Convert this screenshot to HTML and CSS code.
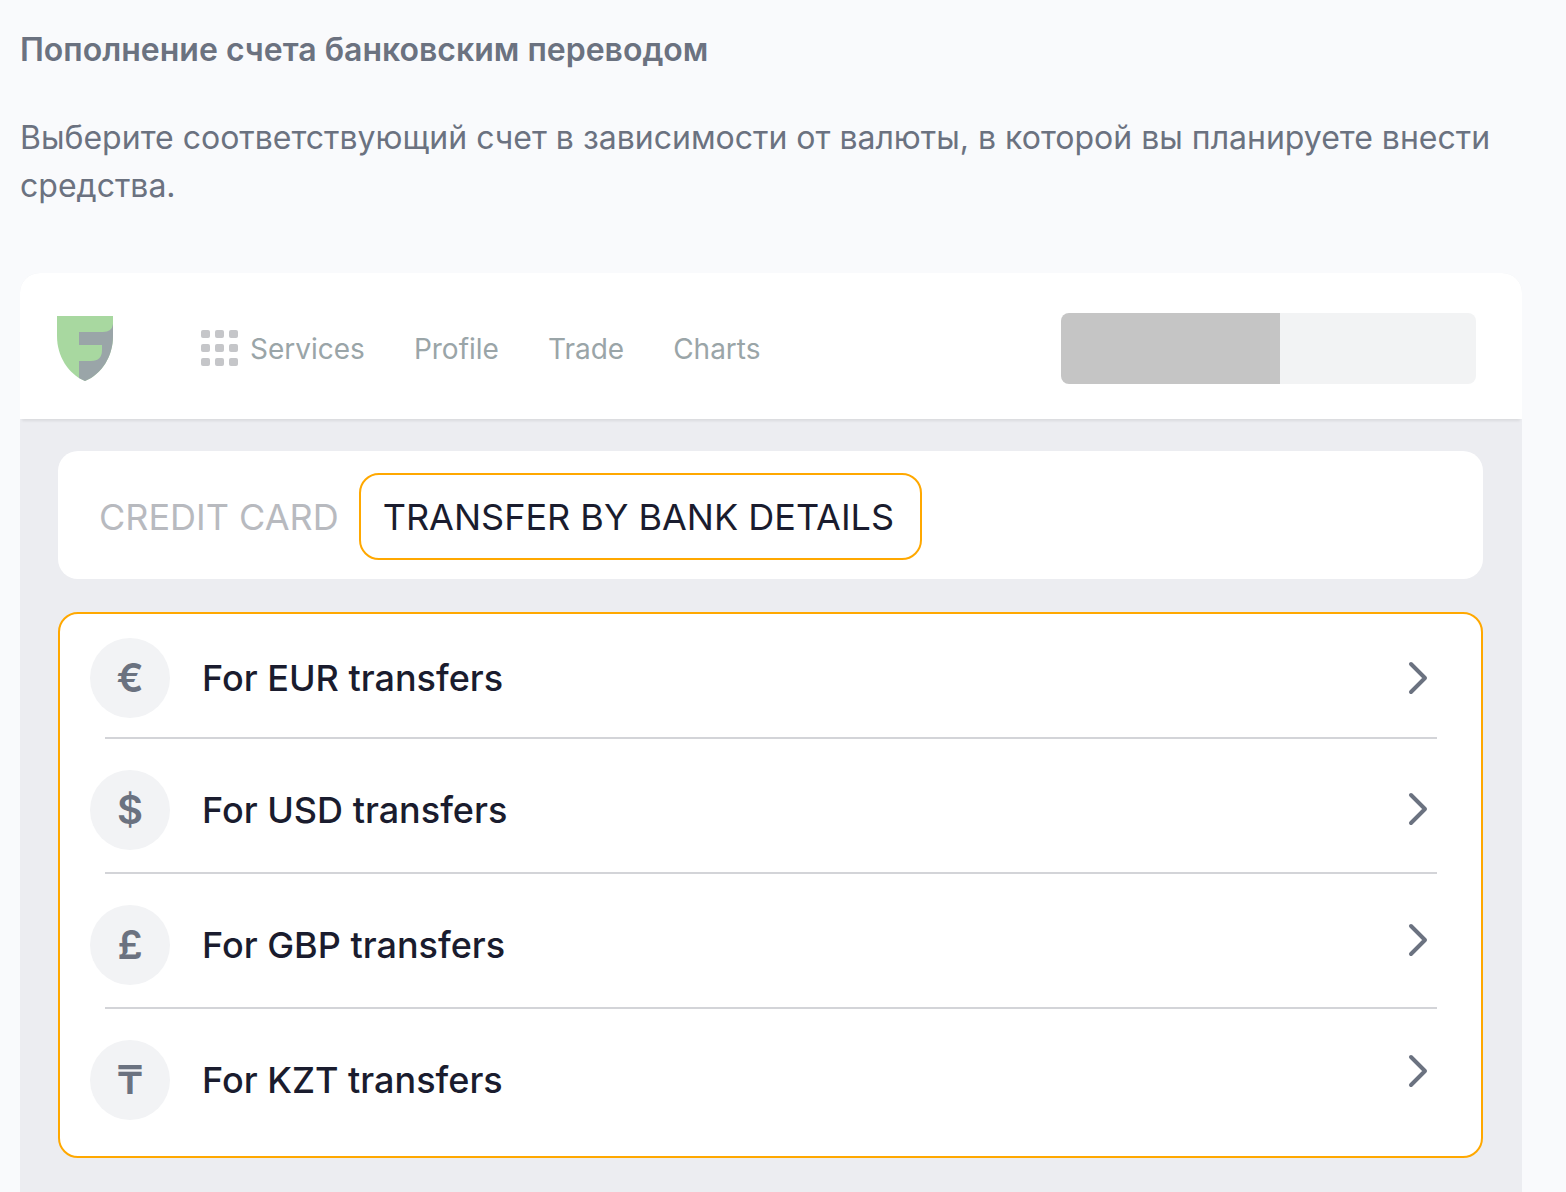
FILE: index.html
```html
<!DOCTYPE html>
<html lang="ru">
  <head>
    <meta charset="UTF-8" />
    <title>Пополнение счета банковским переводом</title>
    <meta name="viewport" content="width=device-width, initial-scale=1.0" />
    <link rel="stylesheet" href="styles.css">
  </head>
  <body>
    <main class="article">
      <h1>Пополнение счета банковским переводом</h1>
      <p>Выберите соответствующий счет в зависимости от валюты, в которой вы планируете внести средства.</p>

      <div class="screen" lang="en">
        <header class="topbar">
          <a href="#" class="logo" aria-label="Home">
            <svg width="56" height="65" viewBox="0 0 56 65">
              <path fill="#a8d8a0" d="M0 0H56V20C56 40 45 58 28 65C11 58 0 40 0 20Z" />
              <path fill="#9aa5a8" d="M22 16H46Q55 16 56 8V20C56 40 45 58 28 65L22 62V45H34Q45 45 45 34V29H22Z" />
            </svg>
          </a>
          <nav class="menu">
            <a href="#" class="services">
              <svg width="37" height="37" viewBox="0 0 37 37" fill="#c5c6c9">
                <rect x="0" y="0" width="9" height="8" rx="2" />
                <rect x="14" y="0" width="9" height="8" rx="2" />
                <rect x="28" y="0" width="9" height="8" rx="2" />
                <rect x="0" y="14" width="9" height="8" rx="2" />
                <rect x="14" y="14" width="9" height="8" rx="2" />
                <rect x="28" y="14" width="9" height="8" rx="2" />
                <rect x="0" y="28" width="9" height="8" rx="2" />
                <rect x="14" y="28" width="9" height="8" rx="2" />
                <rect x="28" y="28" width="9" height="8" rx="2" />
              </svg>
              Services
            </a>
            <a href="#">Profile</a>
            <a href="#">Trade</a>
            <a href="#">Charts</a>
          </nav>
          <div class="account">
            <div class="account-main"></div>
            <div class="account-extra"></div>
          </div>
        </header>

        <div class="content">
          <div class="tabs">
            <button class="tab">CREDIT CARD</button>
            <button class="tab active">TRANSFER BY BANK DETAILS</button>
          </div>

          <div class="transfers">
            <ul>
              <li><a href="#"><span class="currency">€</span>For EUR transfers</a></li>
              <li><a href="#"><span class="currency">$</span>For USD transfers</a></li>
              <li><a href="#"><span class="currency">£</span>For GBP transfers</a></li>
              <li><a href="#"><span class="currency">₸</span>For KZT transfers</a></li>
            </ul>
            <div class="arrows" aria-hidden="true">
              <svg viewBox="0 0 20 34"><path d="M3 3L17 17L3 31" /></svg>
              <svg viewBox="0 0 20 34"><path d="M3 3L17 17L3 31" /></svg>
              <svg viewBox="0 0 20 34"><path d="M3 3L17 17L3 31" /></svg>
              <svg viewBox="0 0 20 34"><path d="M3 3L17 17L3 31" /></svg>
            </div>
          </div>
        </div>
      </div>
    </main>
  </body>
</html>
```
FILE: styles.css
```css
* {
  box-sizing: border-box;
}

body {
  margin: 0;
  background-color: #f9fafc;
  color: #6b7280;
  font-family: Inter, "Liberation Sans", sans-serif;
  font-size: 32px;
  line-height: 48px;
  font-optical-sizing: none;
}

a {
  color: inherit;
  text-decoration: none;
}

svg {
  display: block;
}

.article {
  padding: 26px 44px 0 20px;
}

h1 {
  margin: 0 0 40px;
  font-size: 32px;
  font-weight: 600;
}

p {
  margin: 0 0 63px;
}

.screen {
  background-color: #ecedf1;
  border-radius: 20px 20px 0 0;
}

.topbar {
  display: flex;
  align-items: center;
  height: 146px;
  padding: 5px 46px 0 37px;
  background-color: #fff;
  border-radius: 20px 20px 0 0;
  box-shadow: 0 4px 3px -2px rgba(0, 0, 0, 0.08);
}

.menu {
  display: flex;
  align-items: center;
  gap: 49px;
  margin-left: 88px;
  color: #9aa5a8;
  font-size: 28px;
}

.services {
  display: flex;
  align-items: center;
  gap: 12px;
}

.account {
  display: flex;
  width: 415px;
  height: 71px;
  margin-left: auto;
  border-radius: 8px;
  overflow: hidden;
}

.account-main {
  width: 219px;
  background-color: #c5c5c5;
}

.account-extra {
  flex: 1;
  background-color: #f2f3f4;
}

.content {
  padding: 32px 39px 34px 38px;
}

.tabs {
  display: flex;
  align-items: center;
  padding: 22px 20px 19px;
  height: 128px;
  margin-bottom: 33px;
  background-color: #fff;
  border-radius: 20px;
}

.tab {
  height: 87px;
  padding: 1px 18px 0 19px;
  border: 2px solid transparent;
  border-radius: 20px;
  background: none;
  color: #b8babf;
  font: inherit;
  font-size: 36px;
  white-space: nowrap;
  cursor: pointer;
}

.tab.active {
  padding: 1px 26px 0 22px;
  border-color: #ffa800;
  color: #1a1c2e;
}

.transfers {
  position: relative;
  padding: 0 44px 14px 45px;
  background-color: #fff;
  border: 2px solid #ffa800;
  border-radius: 20px;
}

.transfers ul {
  margin: 0;
  padding: 0;
  list-style: none;
}

.transfers li {
  padding: 31px 0 22px;
  border-bottom: 2px solid #d3d4d8;
}

.transfers li:first-child {
  padding: 24px 0 19px;
}

.transfers li:last-child {
  border-bottom: none;
}

.transfers li a {
  display: flex;
  align-items: center;
  gap: 32px;
  margin-left: -15px;
  color: #1a1c2e;
  font-size: 36px;
  font-weight: 500;
}

.currency {
  width: 80px;
  height: 80px;
  border-radius: 50%;
  background-color: #f2f3f5;
  color: #6b7280;
  font-size: 40px;
  font-weight: 600;
  line-height: 80px;
  text-align: center;
}

.arrows {
  position: absolute;
  top: 47px;
  right: 53px;
  display: grid;
  gap: 97px;
  pointer-events: none;
}

.arrows svg {
  width: 20px;
  height: 34px;
  fill: none;
  stroke: #6b7280;
  stroke-width: 4;
  stroke-linecap: round;
  stroke-linejoin: round;
}
```
